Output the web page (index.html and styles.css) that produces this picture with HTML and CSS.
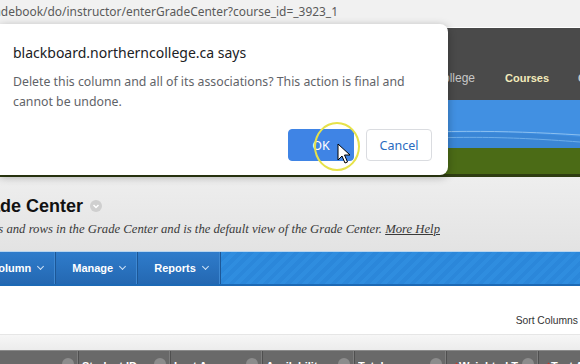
FILE: index.html
```html
<!DOCTYPE html>
<html lang="en">
<head>
<meta charset="UTF-8">
<meta name="viewport" content="width=device-width, initial-scale=1.0">
<title>Full Grade Center</title>
<link rel="stylesheet" href="styles.css">
</head>
<body>
    <div class="urlbar">
        <div class="url">https://blackboard.northerncollege.ca/webapps/gradebook/do/instructor/enterGradeCenter?course_id=_3923_1</div>
    </div>

    <div class="page">
        <header class="topnav">
            <div class="nav-left">
                <a href="#">My Institution</a>
                <a href="#">Northern College</a>
            </div>
            <a href="#" class="nav-active">Courses</a>
            <a href="#">Community</a>
        </header>

        <div class="banner">
            <svg width="580" height="48" viewBox="0 0 580 48">
                <path d="M0 40 C120 30 220 44 330 38 S500 30 580 37 L580 48 L0 48 Z" fill="#3a86d6"/>
                <path d="M0 38 C120 30 220 42 330 36 S500 30 580 35" stroke="#8cc0f0" stroke-width="1" fill="none"/>
                <path d="M0 43 C140 36 240 46 350 41 S500 36 580 42" stroke="#6eaee9" stroke-width="1" fill="none"/>
            </svg>
        </div>
        <div class="brandbar"></div>

        <div class="titlebar">
            <div class="page-title">
                <h1>Grade Center</h1>
                <span class="title-menu">
                    <svg width="12" height="12" viewBox="0 0 12 12"><circle cx="6" cy="6" r="6" fill="#cfcfcf"/><path d="M3.5 5 L6 7.5 L8.5 5" stroke="#fff" stroke-width="1.5" fill="none"/></svg>
                </span>
            </div>
            <div class="desc">
                <p>The Full Grade Center displays all columns and rows in the Grade Center and is the default view of the Grade Center. <a href="#">More Help</a></p>
            </div>
        </div>

        <nav class="actionbar">
            <div class="action-buttons">
                <a href="#" class="first">Create Column <span class="chev"></span></a>
                <a href="#">Manage <span class="chev"></span></a>
                <a href="#">Reports <span class="chev"></span></a>
            </div>
        </nav>

        <div class="sortrow">
            <span>Sort Columns</span>
        </div>
        <div class="strip"></div>

        <div class="colheads">
            <div class="col col-first"><span class="label">Username</span><span class="dot"></span></div>
            <div class="col"><span class="label">Student ID</span><span class="dot"></span></div>
            <div class="col"><span class="label">Last Access</span><span class="dot"></span></div>
            <div class="col"><span class="label">Availability</span><span class="dot"></span></div>
            <div class="col"><span class="label">Total</span><span class="dot"></span></div>
            <div class="col"><span class="label"><svg class="check" width="8" height="8" viewBox="0 0 8 8"><path d="M1 5 L3 7 L7 1" stroke="#c0392b" stroke-width="1.6" fill="none"/></svg>Weighted Total</span><span class="dot"></span></div>
            <div class="col"><span class="label"><svg class="check" width="8" height="8" viewBox="0 0 8 8"><path d="M1 5 L3 7 L7 1" stroke="#c0392b" stroke-width="1.6" fill="none"/></svg>Test A</span><span class="dot"></span></div>
        </div>
    </div>

    <div class="dialog">
        <h2>blackboard.northerncollege.ca says</h2>
        <p>Delete this column and all of its associations? This action is final and cannot be undone.</p>
        <div class="dialog-buttons">
            <button class="btn-ok">OK</button>
            <button class="btn-cancel">Cancel</button>
        </div>
    </div>

    <div class="click-ring"></div>
    <svg class="cursor" width="14" height="22" viewBox="0 0 14 22">
        <path d="M1 1 L1 17 L5 13 L8 20 L10.5 19 L7.5 12 L13 12 Z" fill="#fff" stroke="#000" stroke-width="1"/>
    </svg>
</body>
</html>
```

FILE: styles.css
```css
body {
    margin: 0;
    width: 580px;
    height: 364px;
    overflow: hidden;
    position: relative;
    font-family: "Liberation Sans", Arial, sans-serif;
    background: #fff;
}
a {
    text-decoration: none;
    color: inherit;
}

/* address bar */
.urlbar {
    height: 27px;
    background: #f1f1f1;
    overflow: hidden;
}
.url {
    width: 338px;
    display: flex;
    justify-content: flex-end;
    white-space: nowrap;
    font-family: "Noto Sans", sans-serif;
    font-size: 11.95px;
    line-height: 22px;
    color: #5a5a5a;
    padding-top: 1px;
}

.page {
    overflow: hidden;
}

/* top navigation */
.topnav {
    height: 72px;
    margin-top: 1px;
    background: #4a4a4a;
    display: flex;
    align-items: flex-start;
    white-space: nowrap;
    font-size: 11px;
    font-weight: bold;
}
.topnav a {
    padding-top: 43px;
    line-height: 14px;
    color: #c8c8c8;
    flex-shrink: 0;
}
.nav-left {
    flex: 0 0 475px;
    display: flex;
    justify-content: flex-end;
    gap: 30px;
}
.nav-left a {
    font-weight: normal;
    font-size: 12px;
}
.topnav .nav-active {
    color: #f3ebbb;
    margin-left: 30px;
    margin-right: 29px;
}

.banner {
    height: 48px;
    background: #4190e2;
}
.banner svg {
    display: block;
}
.brandbar {
    height: 26px;
    background: #4b6b16;
    border-bottom: 3px solid #2f3d12;
}

/* page title */
.titlebar {
    height: 74px;
    background: linear-gradient(#eeeeee, #e3e3e3);
    border-bottom: 1px solid #b9d5ee;
    overflow: hidden;
}
.page-title {
    display: flex;
    align-items: center;
    gap: 7px;
    margin-left: -31px;
    padding-top: 18px;
}
.page-title h1 {
    margin: 0;
    font-size: 18px;
    line-height: 22px;
    color: #111;
}
.title-menu svg {
    display: block;
}
.desc {
    width: 440px;
    display: flex;
    justify-content: flex-end;
    white-space: nowrap;
}
.desc p {
    margin: 4px 0 0;
    font-family: "Liberation Serif", serif;
    font-style: italic;
    font-size: 12.7px;
    line-height: 16px;
    color: #3a3a3a;
}
.desc a {
    text-decoration: underline;
    color: #3a3a3a;
}

/* action bar */
.actionbar {
    height: 32px;
    background: repeating-linear-gradient(135deg, #2b87da 0 4px, #2f8ddf 4px 8px);
    border-bottom: 2px solid #1c69b5;
    overflow: hidden;
}
.action-buttons {
    display: flex;
    height: 32px;
    width: max-content;
    margin-left: -63px;
    background: linear-gradient(#2f7ccb, #2468b2);
}
.action-buttons a {
    display: flex;
    align-items: center;
    gap: 7px;
    padding: 0 12px 0 16px;
    color: #fff;
    font-weight: bold;
    font-size: 11px;
    border-right: 1px solid #1d5796;
    box-shadow: inset -1px 0 0 #3e88d2;
    white-space: nowrap;
}
.chev {
    width: 4px;
    height: 4px;
    border-right: 1.5px solid #cfe2f6;
    border-bottom: 1.5px solid #cfe2f6;
    transform: rotate(45deg);
    margin-top: -3px;
}

/* sort row */
.sortrow {
    height: 48px;
    display: flex;
    justify-content: flex-end;
    align-items: flex-end;
    padding-right: 2px;
    font-size: 10.3px;
    color: #333;
    white-space: nowrap;
}
.sortrow span {
    line-height: 14px;
    margin-bottom: 6px;
}
.strip {
    height: 15px;
    background: linear-gradient(#f6f6f6, #ececec);
    border-top: 1px solid #e6e6e6;
}

/* column headers */
.colheads {
    display: flex;
    margin-left: -13px;
    height: 20px;
    background: #696969;
    border-top: 1px solid #8a8a8a;
}
.col {
    flex: 0 0 92px;
    box-sizing: border-box;
    display: flex;
    align-items: flex-start;
    padding: 8px 4px 0 3px;
    border-right: 1px solid #4f4f4f;
    box-shadow: inset -1px 0 0 #7d7d7d;
    overflow: hidden;
}
.col-first .label {
    padding-left: 1px;
}
.label {
    flex: 1;
    overflow: hidden;
    white-space: nowrap;
    color: #fff;
    font-weight: bold;
    font-size: 11px;
    line-height: 14px;
}
.check {
    margin-right: 1px;
}
.dot {
    flex: 0 0 12px;
    height: 12px;
    border-radius: 50%;
    background: #8c8c8c;
    margin-top: -1px;
}

/* confirm dialog */
.dialog {
    position: absolute;
    left: 0;
    top: 24px;
    width: 448px;
    height: 151px;
    box-sizing: border-box;
    background: #fff;
    border-radius: 0 8px 8px 0;
    box-shadow: 0 2px 8px rgba(0,0,0,0.3);
    padding: 19px 16px 0 13px;
    font-family: "Noto Sans", sans-serif;
}
.dialog h2 {
    margin: 0;
    font-size: 14px;
    font-weight: normal;
    line-height: 20px;
    color: #202124;
}
.dialog p {
    margin: 9px 0 0;
    font-size: 12.3px;
    line-height: 20px;
    color: #5f6368;
    width: 410px;
}
.dialog-buttons {
    display: flex;
    justify-content: flex-end;
    gap: 12px;
    margin-top: 17px;
}
.dialog-buttons button {
    width: 66px;
    height: 32px;
    border-radius: 4px;
    font-family: "Noto Sans", sans-serif;
    font-size: 12.5px;
    cursor: pointer;
}
.btn-ok {
    background: #3f84e5;
    border: 1px solid #3f84e5;
    color: #fff;
}
.btn-cancel {
    background: #fff;
    border: 1px solid #dadce0;
    color: #2a6bbf;
}

.click-ring {
    position: absolute;
    left: 314px;
    top: 122px;
    width: 42px;
    height: 45px;
    border: 2px solid #e6e24a;
    border-radius: 50%;
}
.cursor {
    position: absolute;
    left: 337px;
    top: 143px;
}
```
